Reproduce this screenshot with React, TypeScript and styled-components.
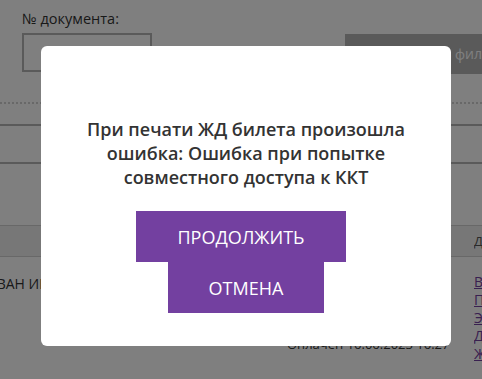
import React from "react";
import styled, { createGlobalStyle } from "styled-components";

const GlobalStyle = createGlobalStyle`
  html, body {
    margin: 0;
    padding: 0;
    background: #fff;
    overflow: hidden;
  }
  body {
    font-family: "Open Sans", "Liberation Sans", sans-serif;
    color: #333;
  }
`;

const Page = styled.div`
  width: 482px;
  height: 379px;
  overflow: hidden;
  position: relative;
`;

const Filters = styled.div`
  padding: 9px 0 0 22px;
`;

const Label = styled.div`
  font-size: 14.5px;
  line-height: 20px;
  color: #333;
`;

const FilterRow = styled.div`
  display: flex;
  align-items: flex-start;
  justify-content: space-between;
  margin-top: 4px;
`;

const Input = styled.div`
  width: 126px;
  height: 35px;
  border: 2px solid #b4b4b4;
`;

const FilterButton = styled.div`
  margin-top: 1px;
  height: 40px;
  width: 137px;
  background: #b4b4b4;
  color: #fff;
  font-size: 14px;
  line-height: 40px;
  white-space: nowrap;
  overflow: hidden;
  text-indent: 28px;
`;

const Dotted = styled.div`
  margin-top: 28px;
  border-top: 2px dotted #d0d0d0;
`;

const Search = styled.div`
  margin-top: 20px;
  height: 36px;
  border-top: 2px solid #b4b4b4;
  border-bottom: 2px solid #b4b4b4;
`;

const Table = styled.div`
  margin-top: 61px;
  display: grid;
  grid-template-columns: 1fr 8px;
  margin-left: -8px;
`;

const HeadCell = styled.div`
  height: 30px;
  background: #eee;
  border-top: 1px solid #d0d0d0;
  border-bottom: 1px solid #d0d0d0;
  font-size: 13px;
  line-height: 30px;
  color: #555;
  white-space: nowrap;
  overflow: hidden;
`;

const Cell = styled.div`
  font-size: 14px;
  line-height: 18px;
  padding-top: 18px;
  white-space: nowrap;
  overflow: hidden;
`;

const Name = styled.div`
  margin-left: -6px;
`;

const MidText = styled.div`
  margin: 42px 0 0 295px;
  font-size: 13px;
  color: #333;
`;

const LinkList = styled.div`
  display: flex;
  flex-direction: column;
  padding-top: 16px;
  overflow: hidden;
`;

const Link = styled.a`
  font-size: 14px;
  line-height: 18px;
  color: #7340a0;
  text-decoration: underline;
  white-space: nowrap;
`;

const Overlay = styled.div`
  position: absolute;
  inset: 0;
  background: rgba(0, 0, 0, 0.5);
  padding: 46px 0 0 41px;
`;

const Modal = styled.div`
  width: 410px;
  height: 300px;
  box-sizing: border-box;
  background: #fff;
  border-radius: 6px;
  padding: 71px 20px 0;
  display: flex;
  flex-direction: column;
  align-items: center;
`;

const Message = styled.div`
  font-size: 18px;
  font-weight: 600;
  line-height: 24px;
  text-align: center;
  color: #333;
  width: 340px;
`;

const Actions = styled.div`
  margin-top: 22px;
  display: flex;
  flex-direction: column;
  align-items: center;
`;

const Button = styled.button<{ $shift?: boolean }>`
  border: none;
  background: #7340a0;
  color: #fff;
  font-family: "Open Sans", "Liberation Sans", sans-serif;
  font-size: 18px;
  text-transform: uppercase;
  height: 51px;
  padding: 0 41px;
  margin-right: ${(p) => (p.$shift ? "10px" : "0")};
  cursor: pointer;
`;

export default function App() {
  return (
    <>
      <GlobalStyle />
      <Page>
        <Filters>
          <Label>№ документа:</Label>
          <FilterRow>
            <Input />
            <FilterButton>Применить фильтр</FilterButton>
          </FilterRow>
        </Filters>
        <Dotted />
        <Search />
        <Table>
          <HeadCell />
          <HeadCell>Действия</HeadCell>
          <Cell>
            <Name>ИВАН ИВАНОВ</Name>
            <MidText>Оплачен 16.06.2023 16:27</MidText>
          </Cell>
          <LinkList>
            <Link>Вернуть</Link>
            <Link>Печать</Link>
            <Link>Электронный</Link>
            <Link>Детали</Link>
            <Link>Журнал</Link>
          </LinkList>
        </Table>
        <Overlay>
          <Modal>
            <Message>
              При печати ЖД билета произошла ошибка: Ошибка при попытке
              совместного доступа к ККТ
            </Message>
            <Actions>
              <Button $shift>Продолжить</Button>
              <Button>Отмена</Button>
            </Actions>
          </Modal>
        </Overlay>
      </Page>
    </>
  );
}
